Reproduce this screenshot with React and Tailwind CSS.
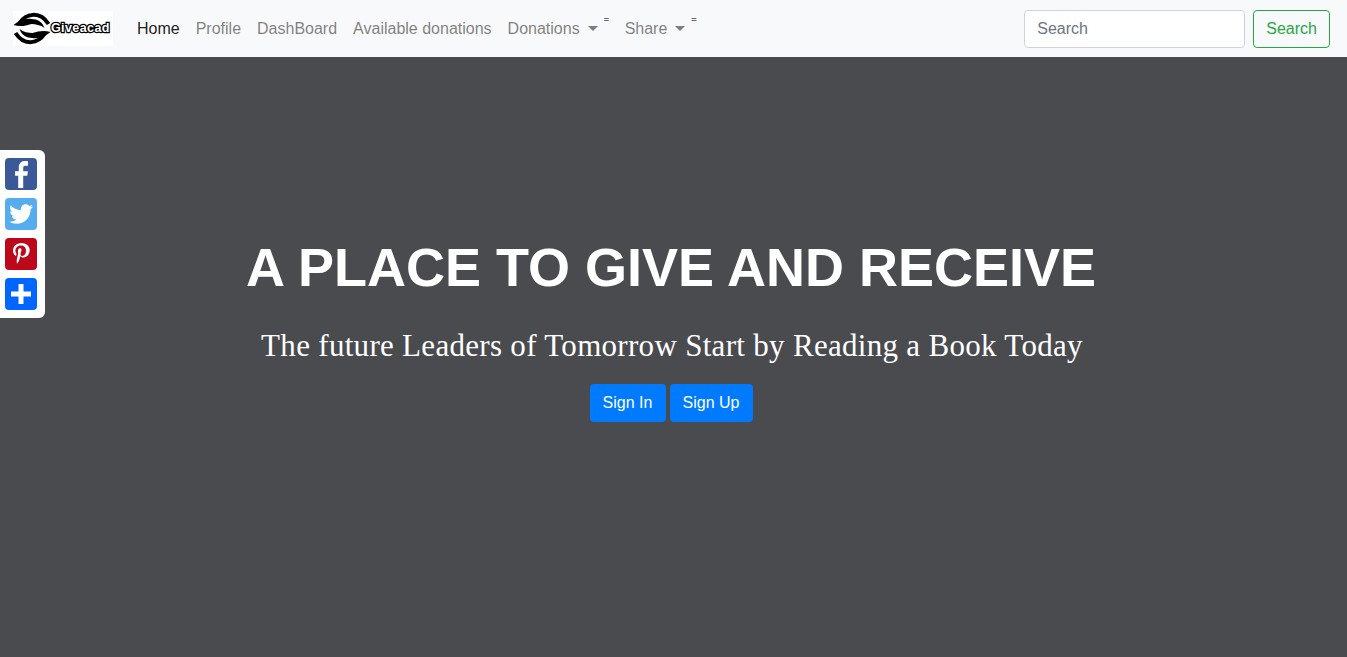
const sans = "font-['Liberation_Sans',Arial,sans-serif]";

function Hand(props) {
  return (
    <g {...props}>
      <path d="M6 12 C12 3 26 -1 35 13" fill="none" stroke="#000" strokeWidth="4" />
      <path d="M0 14 C6 9 12 7 18 8 C24 8 29 11 31 17 C27 14 22 13 18 13 C12 15 6 16 0 14Z" fill="#000" />
    </g>
  );
}

function Logo() {
  return (
    <div className="flex h-[35px] w-[100px] items-center overflow-hidden bg-white">
      <svg width="38" height="35" viewBox="0 0 37 35" className="shrink-0">
        <Hand />
        <Hand transform="rotate(180 18.500 17.500)" />
      </svg>
      <span className="text-[12.500px] leading-none font-bold tracking-[0.4px] text-white [-webkit-text-stroke:2.500px_#000] [paint-order:stroke_fill]">
        Giveacad
      </span>
    </div>
  );
}

function Caret() {
  return <span className="ml-[8px] inline-block h-0 w-0 border-x-[5px] border-t-[5px] border-x-transparent border-t-[#7d7d7d] align-[3px]" />;
}

function Dropdown({ label }) {
  return (
    <div className="flex items-start">
      <a className="px-2 text-[rgba(0,0,0,0.5)]">
        {label}
        <Caret />
      </a>
      <span className="mt-[-1px] ml-[-2px] w-[13px] text-[9px] leading-none font-bold text-[#666]">=</span>
    </div>
  );
}

function ShareBar() {
  return (
    <div className="absolute top-[150px] left-0 flex w-[45px] flex-col gap-2 rounded-r-md bg-white py-2 pl-[5px]">
      <a className="flex h-8 w-8 items-center justify-center rounded bg-[#3b5998]">
        <svg width="32" height="32" viewBox="0 0 32 32">
          <path fill="#fff" d="M23 3.300v4.400h-2.500c-1.800 0-2.300.9-2.300 2.300v3.200h4.700l-.6 4.600h-4.100V30h-5V17.800H10v-4.600h3.800V9.500C13.800 5.600 16.200 3 19.800 3c1.500 0 2.700.1 3.200.3z" />
        </svg>
      </a>
      <a className="flex h-8 w-8 items-center justify-center rounded bg-[#55acee]">
        <svg width="32" height="32" viewBox="0 0 32 32">
          <path fill="#fff" d="M28 8.600c-.9.4-1.800.7-2.800.8 1-.6 1.800-1.600 2.200-2.700-1 .6-2 1-3.100 1.200-.9-1-2.200-1.600-3.600-1.600-2.700 0-4.900 2.200-4.900 4.900 0 .4 0 .8.100 1.100-4.100-.2-7.700-2.200-10.100-5.100-.4.700-.7 1.600-.7 2.500 0 1.700.9 3.200 2.200 4.100-.8 0-1.600-.2-2.200-.6v.1c0 2.400 1.700 4.400 3.900 4.800-.4.100-.8.200-1.300.2-.3 0-.6 0-.9-.1.600 2 2.400 3.400 4.600 3.400-1.700 1.300-3.800 2.100-6.100 2.100-.4 0-.8 0-1.200-.1 2.200 1.400 4.800 2.200 7.500 2.200 9.100 0 14-7.500 14-14v-.6c1-.7 1.800-1.600 2.400-2.600z" />
        </svg>
      </a>
      <a className="flex h-8 w-8 items-center justify-center rounded bg-[#bd081c]">
        <svg width="32" height="32" viewBox="0 0 32 32">
          <path fill="#fff" d="M16.500 5C11 5 8 8.700 8 12.700c0 1.900 1 4.200 2.600 5 .3.100.4.100.5-.2l.4-1.500c0-.2 0-.3-.1-.5-.6-.7-1-1.700-1-2.700 0-2.700 2-5.300 5.500-5.300 3 0 5.100 2 5.100 4.900 0 3.200-1.600 5.500-3.700 5.500-1.200 0-2-1-1.800-2.100.3-1.400 1-2.900 1-3.900 0-.9-.5-1.600-1.500-1.600-1.200 0-2.100 1.200-2.100 2.900 0 1 .4 1.800.4 1.800l-1.400 5.900c-.4 1.700 0 4.300 0 4.600 0 .1.200.2.300.1.200-.2 1.800-2.700 2.300-4.400l.8-3.100c.4.800 1.600 1.500 2.900 1.500 3.800 0 6.500-3.500 6.500-7.800C24.700 8 21 5 16.500 5z" />
        </svg>
      </a>
      <a className="flex h-8 w-8 items-center justify-center rounded bg-[#0166ff]">
        <svg width="32" height="32" viewBox="0 0 32 32">
          <path fill="#fff" d="M13.500 6h5v7.500h7.500v5h-7.500v7.500h-5v-7.500H6v-5h7.500z" />
        </svg>
      </a>
    </div>
  );
}

export default function App() {
  return (
    <div className={`relative flex h-[657px] flex-col overflow-hidden bg-[#4a4b4f] ${sans}`}>
      {/* navbar */}
      <nav className="flex h-[57px] shrink-0 items-center bg-[#f8f9fa] pr-[17px] pl-[13px] text-base">
        <Logo />
        <div className="ml-4 flex items-center">
          <a className="px-2 text-[rgba(0,0,0,0.9)]">Home</a>
          <a className="px-2 text-[rgba(0,0,0,0.5)]">Profile</a>
          <a className="px-2 text-[rgba(0,0,0,0.5)]">DashBoard</a>
          <a className="px-2 text-[rgba(0,0,0,0.5)]">Available donations</a>
          <Dropdown label="Donations" />
          <Dropdown label="Share" />
        </div>
        <div className="ml-auto flex items-center gap-2">
          <input
            placeholder="Search"
            className="h-[38px] w-[221px] rounded border border-[#ced4da] bg-white px-3 text-base outline-none placeholder:text-[#6c757d]"
          />
          <button className="h-[38px] rounded border border-[#28a745] px-3 text-base text-[#28a745]">Search</button>
        </div>
      </nav>

      <ShareBar />

      {/* hero */}
      <main className="flex flex-col items-center pt-[178px] pr-[5px] text-white">
        <h1 className="text-[54px] leading-[65px] font-bold">A PLACE TO GIVE AND RECEIVE</h1>
        <p className="mt-[28px] ml-[2px] font-['Liberation_Serif',serif] text-[31px] leading-[35px] tracking-[0.3px]">
          The future Leaders of Tomorrow Start by Reading a Book Today
        </p>
        <div className="mt-[21px] flex gap-1">
          <button className="h-[38px] w-[76px] rounded bg-[#007bff] text-base text-white">Sign In</button>
          <button className="h-[38px] w-[83px] rounded bg-[#007bff] text-base text-white">Sign Up</button>
        </div>
      </main>
    </div>
  );
}
